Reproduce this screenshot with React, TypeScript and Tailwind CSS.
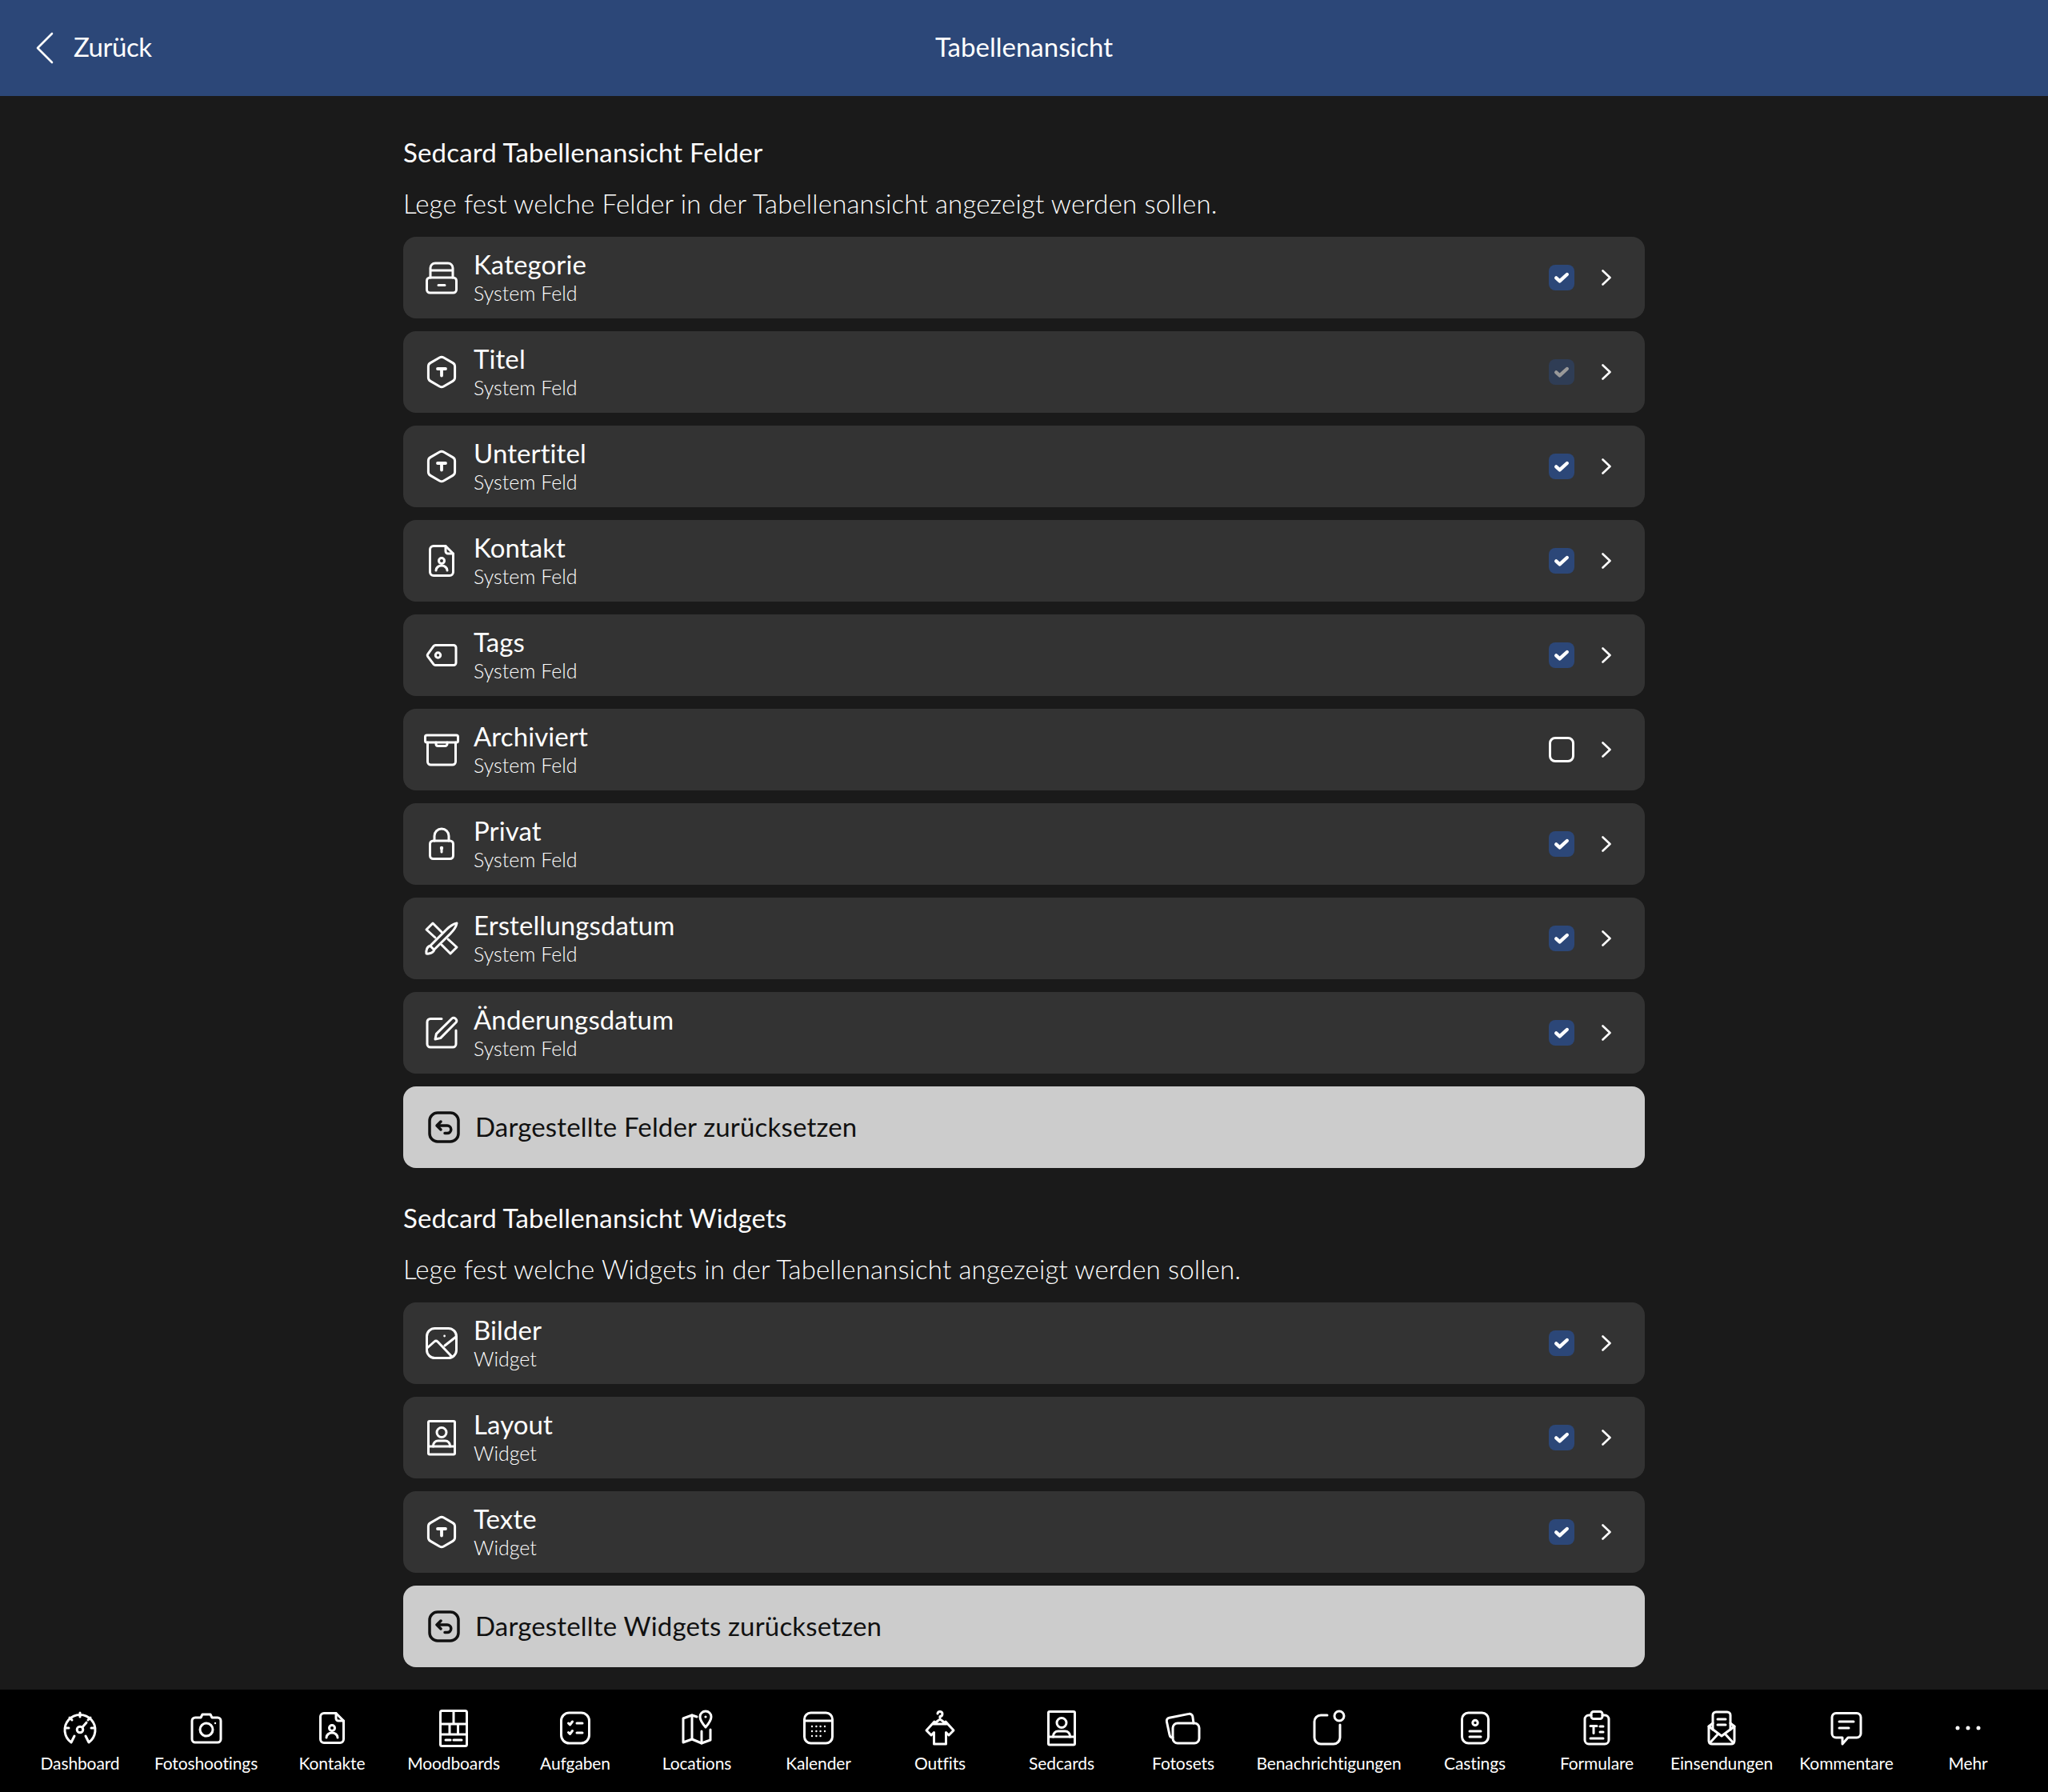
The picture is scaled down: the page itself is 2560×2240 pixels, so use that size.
import React from "react";

type IconProps = { className?: string };

const Svg: React.FC<React.PropsWithChildren<IconProps>> = ({ className, children }) => (
  <svg
    viewBox="0 0 24 24"
    fill="none"
    stroke="currentColor"
    strokeWidth={1.5}
    strokeLinecap="round"
    strokeLinejoin="round"
    className={className ?? "w-12 h-12 shrink-0"}
  >
    {children}
  </svg>
);

const DrawerIcon = () => (
  <Svg>
    <rect x="2.75" y="12" width="18.5" height="9.5" rx="2" />
    <path d="M5 12V6a3 3 0 0 1 3-3h8a3 3 0 0 1 3 3v6M5 7.5h14M10 16.75h4" />
  </Svg>
);

const HexTextIcon = () => (
  <Svg>
    <path d="M10.7 3 5 6.3a2.6 2.6 0 0 0-1.3 2.2v7a2.6 2.6 0 0 0 1.3 2.2l5.7 3.3a2.6 2.6 0 0 0 2.6 0l5.7-3.3a2.6 2.6 0 0 0 1.3-2.2v-7a2.6 2.6 0 0 0-1.3-2.2L13.3 3a2.6 2.6 0 0 0-2.6 0Z" />
    <path d="M9.5 10h5M12 10v4.25" strokeWidth={1.9} />
  </Svg>
);

const ContactDocIcon = () => (
  <Svg>
    <path d="M7 2.75h7.5l4.75 4.75V19a2.25 2.25 0 0 1-2.25 2.25H7A2.25 2.25 0 0 1 4.75 19V5A2.25 2.25 0 0 1 7 2.75Z" />
    <path d="M14.5 2.75V6a1.5 1.5 0 0 0 1.5 1.5h3.25" />
    <circle cx="12" cy="12" r="1.75" />
    <path d="M8.5 18a3.5 3 0 0 1 7 0" />
  </Svg>
);

const TagIcon = () => (
  <Svg>
    <path d="M8.2 5.75H19.5a1.5 1.5 0 0 1 1.5 1.5v9.5a1.5 1.5 0 0 1-1.5 1.5H8.2a1.5 1.5 0 0 1-1.2-.6l-3.7-5a1 1 0 0 1 0-1.2l3.7-5.1a1.5 1.5 0 0 1 1.2-.6Z" />
    <circle cx="9.75" cy="12" r="1.6" />
  </Svg>
);

const ArchiveIcon = () => (
  <Svg>
    <rect x="1.75" y="3" width="20.5" height="4.5" rx="1" />
    <path d="M3.25 7.5v12a2 2 0 0 0 2 2h13.5a2 2 0 0 0 2-2v-12" />
    <path d="M8.5 7.5v1a1.25 1.25 0 0 0 1.25 1.25h4.5A1.25 1.25 0 0 0 15.5 8.5v-1" />
  </Svg>
);

const LockIcon = () => (
  <Svg>
    <rect x="4.75" y="10" width="14.5" height="11.25" rx="2" />
    <path d="M7.5 10V7a4.5 4.5 0 0 1 9 0v3" />
    <circle cx="12" cy="14.5" r="1.1" fill="currentColor" stroke="none" />
    <path d="M12 14.5V17" />
  </Svg>
);

const DesignIcon = () => (
  <Svg>
    <path d="M8 11.5 2.5 6.5l4-4L12 8M16 12.5l5.5 5-4 4L12 16" />
    <path d="M2.5 21.5c-.3-2 .4-4.5 2.4-4.9L15 6.5c2-2 4.8-3.7 6.5-4-.3 1.7-2 4.5-4 6.5L7.4 19c-.4 2-2.9 2.8-4.9 2.5Z" />
    <path d="m5 16.8 2.2 2.2" />
  </Svg>
);

const EditIcon = () => (
  <Svg>
    <path d="M12 3.25H5a2 2 0 0 0-2 2V19a2 2 0 0 0 2 2h14a2 2 0 0 0 2-2v-8.5" />
    <path d="m8 16 .7-3.3L18.5 3a1.4 1.4 0 0 1 2 0l.5.5a1.4 1.4 0 0 1 0 2l-9.7 9.8L8 16Z" />
  </Svg>
);

const ImageIcon = () => (
  <Svg>
    <rect x="2.75" y="2.75" width="18.5" height="18.5" rx="5" />
    <path d="M3 15l4.5-4a1.5 1.5 0 0 1 2 0l8.5 9M14 13.5l7-5.5" />
    <circle cx="13.8" cy="7.5" r=".7" fill="currentColor" stroke="none" />
  </Svg>
);

const LayoutIcon = () => (
  <Svg>
    <rect x="3.75" y="1.75" width="16.5" height="20.75" rx=".75" />
    <path d="M3.75 17.5h16.5" />
    <circle cx="12" cy="8.75" r="3" />
    <path d="M6.75 17.5v-.5a3 3 0 0 1 3-3h4.5a3 3 0 0 1 3 3v.5" />
  </Svg>
);

const UndoIcon = () => (
  <Svg>
    <rect x="3" y="3" width="18" height="18" rx="5" strokeWidth={1.75} />
    <path d="M10 8.5 7.5 11l2.5 2.5M7.5 11H14a2.4 2.4 0 0 1 0 4.8h-1.5" strokeWidth={1.75} />
  </Svg>
);

const GaugeIcon = () => (
  <Svg>
    <path d="M6.5 21A9.5 9.5 0 1 1 17.5 21L15.5 17M6.5 21l2-4" />
    <path d="M12 2.5V5M3 12h2M19 12h2M5.5 5.5 7 7M18.5 5.5 17 7" />
    <circle cx="12" cy="13" r="1.9" />
    <path d="m13.4 11.6 2.6-3" />
  </Svg>
);

const CameraIcon = () => (
  <Svg>
    <path d="m8.5 5.5 1-2h5l1 2H19a2 2 0 0 1 2 2V19a2 2 0 0 1-2 2H5a2 2 0 0 1-2-2V7.5a2 2 0 0 1 2-2h3.5Z" />
    <circle cx="12" cy="13" r="4" />
    <circle cx="17.5" cy="9" r=".6" fill="currentColor" stroke="none" />
  </Svg>
);

const BoardIcon = () => (
  <Svg>
    <rect x="3.75" y="1.25" width="16.5" height="22" rx="1" />
    <path d="M3.75 9.5h16.5M3.75 16h16.5M12 1.25V9.5M9.5 9.5V16M14.75 9.5V16M7 19.5h3M12 19.5h5" />
  </Svg>
);

const TasksIcon = () => (
  <Svg>
    <rect x="3.25" y="2.5" width="17.5" height="19" rx="5" />
    <path d="m7.75 9 1 1 1.5-2M7.75 14.75l1 1 1.5-2M13 9h3.5M13 15h3.5" />
  </Svg>
);

const MapPinIcon = () => (
  <Svg>
    <path d="M12 5 9 4 3.5 6v15L9 19l6 2.5 5.5-2V13" />
    <path d="M9 4v15M15 14v7.5" />
    <path d="M17.5 1.5A3.5 3.5 0 0 0 14 5c0 2.5 3.5 6.5 3.5 6.5S21 7.5 21 5a3.5 3.5 0 0 0-3.5-3.5Z" />
    <circle cx="17.5" cy="5" r=".8" fill="currentColor" stroke="none" />
  </Svg>
);

const CalendarIcon = () => {
  const dots = [
    [8, 11], [10.7, 11], [13.3, 11], [16, 11],
    [8, 14], [10.7, 14], [13.3, 14], [16, 14],
    [8, 17], [10.7, 17], [13.3, 17],
  ];
  return (
    <Svg>
      <rect x="3.25" y="2.5" width="17.5" height="19" rx="4" />
      <path d="M3.25 7.5h17.5" />
      {dots.map(([x, y]) => (
        <circle key={`${x}-${y}`} cx={x} cy={y} r=".6" fill="currentColor" stroke="none" />
      ))}
    </Svg>
  );
};

const OutfitIcon = () => (
  <Svg>
    <path d="M10.5 3a1.5 1.5 0 1 1 1.5 1.75V6.5L8 9.5h8l-4-3" />
    <path d="M8.5 8 3.5 13.5l3 3 1.75-1.75V22h7.5v-7.25L17.5 16.5l3-3L15.5 8" />
  </Svg>
);

const SetsIcon = () => (
  <Svg>
    <rect x="5.5" y="9" width="16.5" height="12.5" rx="3" />
    <path d="M5.5 18a2 2 0 0 1-2-1.7L1.7 8a2 2 0 0 1 1.6-2.4L15.5 3.2a2 2 0 0 1 2.4 1.6L18.5 9" />
  </Svg>
);

const NotifyIcon = () => (
  <Svg>
    <path d="M11 4H7a4 4 0 0 0-4 4v10a4 4 0 0 0 4 4h8a4 4 0 0 0 4-4v-8" />
    <circle cx="18.5" cy="4.5" r="3" />
  </Svg>
);

const CastingIcon = () => (
  <Svg>
    <rect x="3.75" y="2.5" width="16.5" height="19" rx="4" />
    <circle cx="12" cy="8.75" r="1.6" />
    <path d="M8.5 14h7M8.5 17.5h7" />
  </Svg>
);

const FormIcon = () => (
  <Svg>
    <path d="M8.5 4H7a2.5 2.5 0 0 0-2.5 2.5V19.5A2.5 2.5 0 0 0 7 22h10a2.5 2.5 0 0 0 2.5-2.5V6.5A2.5 2.5 0 0 0 17 4h-1.5" />
    <rect x="8.5" y="1.75" width="7" height="4.5" rx="1.5" />
    <path d="M8 10.75h4M10 10.75v4.5M14 11h2M14 14.5h2M8 18.5h8" />
  </Svg>
);

const MailIcon = () => (
  <Svg>
    <path d="M6.5 9 4 11v9a2 2 0 0 0 2 2h12a2 2 0 0 0 2-2v-9l-2.5-2" />
    <path d="M6.5 13V4a2 2 0 0 1 2-2h7a2 2 0 0 1 2 2v9" />
    <path d="m4 11 8 6 8-6M4.5 21.5l5.5-6M19.5 21.5l-5.5-6M9.5 6.5h5M9.5 10h5" />
  </Svg>
);

const CommentIcon = () => (
  <Svg>
    <path d="M5.5 2.75h13A2.5 2.5 0 0 1 21 5.25V15.5a2.5 2.5 0 0 1-2.5 2.5H13L9.5 22v-4h-4A2.5 2.5 0 0 1 3 15.5V5.25a2.5 2.5 0 0 1 2.5-2.5Z" />
    <path d="M7.5 8h9M7.5 12h6" />
  </Svg>
);

const DotsIcon = () => (
  <Svg>
    <circle cx="5.5" cy="12" r="1.25" fill="currentColor" stroke="none" />
    <circle cx="12" cy="12" r="1.25" fill="currentColor" stroke="none" />
    <circle cx="18.5" cy="12" r="1.25" fill="currentColor" stroke="none" />
  </Svg>
);

const fieldRows = [
  { title: "Kategorie", icon: <DrawerIcon />, state: "on" },
  { title: "Titel", icon: <HexTextIcon />, state: "locked" },
  { title: "Untertitel", icon: <HexTextIcon />, state: "on" },
  { title: "Kontakt", icon: <ContactDocIcon />, state: "on" },
  { title: "Tags", icon: <TagIcon />, state: "on" },
  { title: "Archiviert", icon: <ArchiveIcon />, state: "off" },
  { title: "Privat", icon: <LockIcon />, state: "on" },
  { title: "Erstellungsdatum", icon: <DesignIcon />, state: "on" },
  { title: "Änderungsdatum", icon: <EditIcon />, state: "on" },
];

const widgetRows = [
  { title: "Bilder", icon: <ImageIcon />, state: "on" },
  { title: "Layout", icon: <LayoutIcon />, state: "on" },
  { title: "Texte", icon: <HexTextIcon />, state: "on" },
];

const tabs = [
  { label: "Dashboard", icon: <GaugeIcon />, width: "w-[152px]" },
  { label: "Fotoshootings", icon: <CameraIcon />, width: "w-[163px]" },
  { label: "Kontakte", icon: <ContactDocIcon />, width: "w-[152px]" },
  { label: "Moodboards", icon: <BoardIcon />, width: "w-[152px]" },
  { label: "Aufgaben", icon: <TasksIcon />, width: "w-[152px]" },
  { label: "Locations", icon: <MapPinIcon />, width: "w-[152px]" },
  { label: "Kalender", icon: <CalendarIcon />, width: "w-[152px]" },
  { label: "Outfits", icon: <OutfitIcon />, width: "w-[152px]" },
  { label: "Sedcards", icon: <LayoutIcon />, width: "w-[152px]" },
  { label: "Fotosets", icon: <SetsIcon />, width: "w-[152px]" },
  { label: "Benachrichtigungen", icon: <NotifyIcon />, width: "w-[212px]" },
  { label: "Castings", icon: <CastingIcon />, width: "w-[153px]" },
  { label: "Formulare", icon: <FormIcon />, width: "w-[152px]" },
  { label: "Einsendungen", icon: <MailIcon />, width: "w-[160px]" },
  { label: "Kommentare", icon: <CommentIcon />, width: "w-[152px]" },
  { label: "Mehr", icon: <DotsIcon />, width: "w-[152px]" },
];

const Checkbox: React.FC<{ state: string }> = ({ state }) => {
  if (state === "off") {
    return <div className="w-8 h-8 rounded-lg border-[3px] border-white" />;
  }
  return (
    <div className={`w-8 h-8 rounded-lg bg-[#2c4778] flex items-center justify-center ${state === "locked" ? "opacity-50" : ""}`}>
      <svg viewBox="0 0 16 16" className="w-8 h-8" fill="none" stroke="#fff" strokeWidth={2.2} strokeLinecap="round" strokeLinejoin="round">
        <path d="m4.6 8.2 2.2 2 4.6-4.2" />
      </svg>
    </div>
  );
};

const Row: React.FC<{ title: string; sub: string; icon: React.ReactNode; state: string }> = ({ title, sub, icon, state }) => (
  <div className="h-[102px] rounded-2xl bg-[#333333] flex items-center pl-6 pr-[42px] gap-4 text-white">
    {icon}
    <div className="flex-1 flex flex-col">
      <span className="text-[33px] leading-[34px] tracking-[0.1px]">{title}</span>
      <span className="text-[25px] leading-[30px] font-light mt-1">{sub}</span>
    </div>
    <Checkbox state={state} />
    <svg viewBox="0 0 12 20" className="w-3 h-5 ml-[18px]" fill="none" stroke="#fff" strokeWidth={2.6} strokeLinecap="round" strokeLinejoin="round">
      <path d="m1.5 1.5 9 8.5-9 8.5" />
    </svg>
  </div>
);

const ResetButton: React.FC<{ label: string }> = ({ label }) => (
  <div className="h-[102px] rounded-2xl bg-[#cccccc] flex items-center pl-[27px] gap-[15px] text-[#111111]">
    <UndoIcon />
    <span className="text-[33px] leading-[38px] pb-[2px] tracking-[0.17px]">{label}</span>
  </div>
);

const Section: React.FC<{ heading: string; intro: string; children: React.ReactNode; className: string }> = ({
  heading,
  intro,
  children,
  className,
}) => (
  <section className={className}>
    <h2 className="text-[33px] leading-10 text-white tracking-[0.17px]">{heading}</h2>
    <p className="text-[33px] leading-10 font-light text-white tracking-[0.16px] mt-6 mb-[22px]">{intro}</p>
    <div className="flex flex-col gap-4">{children}</div>
  </section>
);

export default function App() {
  return (
    <div className="w-[2560px] h-[2240px] flex flex-col bg-[#1a1a1a] font-['Lato','Noto_Sans',sans-serif]">
      {/* top bar */}
      <header className="relative h-[120px] shrink-0 bg-[#2c4778] flex items-center justify-center text-white">
        <div className="absolute left-[44px] top-0 h-full flex items-center gap-6">
          <svg viewBox="0 0 24 40" className="w-6 h-10" fill="none" stroke="#fff" strokeWidth={2.6} strokeLinecap="round" strokeLinejoin="round">
            <path d="M21 2 3 20l18 18" />
          </svg>
          <span className="text-[33px] tracking-[-0.5px] pb-[2px]">Zurück</span>
        </div>
        <h1 className="text-[33px] pb-[2px]">Tabellenansicht</h1>
      </header>

      <main className="flex-1 w-[1552px] mx-auto">
        <Section
          className="pt-[50px]"
          heading="Sedcard Tabellenansicht Felder"
          intro="Lege fest welche Felder in der Tabellenansicht angezeigt werden sollen."
        >
          {fieldRows.map((row) => (
            <Row key={row.title} title={row.title} sub="System Feld" icon={row.icon} state={row.state} />
          ))}
          <ResetButton label="Dargestellte Felder zurücksetzen" />
        </Section>
        <Section
          className="pt-[42px]"
          heading="Sedcard Tabellenansicht Widgets"
          intro="Lege fest welche Widgets in der Tabellenansicht angezeigt werden sollen."
        >
          {widgetRows.map((row) => (
            <Row key={row.title} title={row.title} sub="Widget" icon={row.icon} state={row.state} />
          ))}
          <ResetButton label="Dargestellte Widgets zurücksetzen" />
        </Section>
      </main>

      {/* tab bar */}
      <nav className="h-[128px] shrink-0 bg-black flex justify-center text-white pt-6">
        {tabs.map((tab) => (
          <div key={tab.label} className={`${tab.width} flex flex-col items-center`}>
            {tab.icon}
            <span className="text-[21px] leading-6 mt-2 tracking-[-0.12px] whitespace-nowrap">{tab.label}</span>
          </div>
        ))}
      </nav>
    </div>
  );
}
